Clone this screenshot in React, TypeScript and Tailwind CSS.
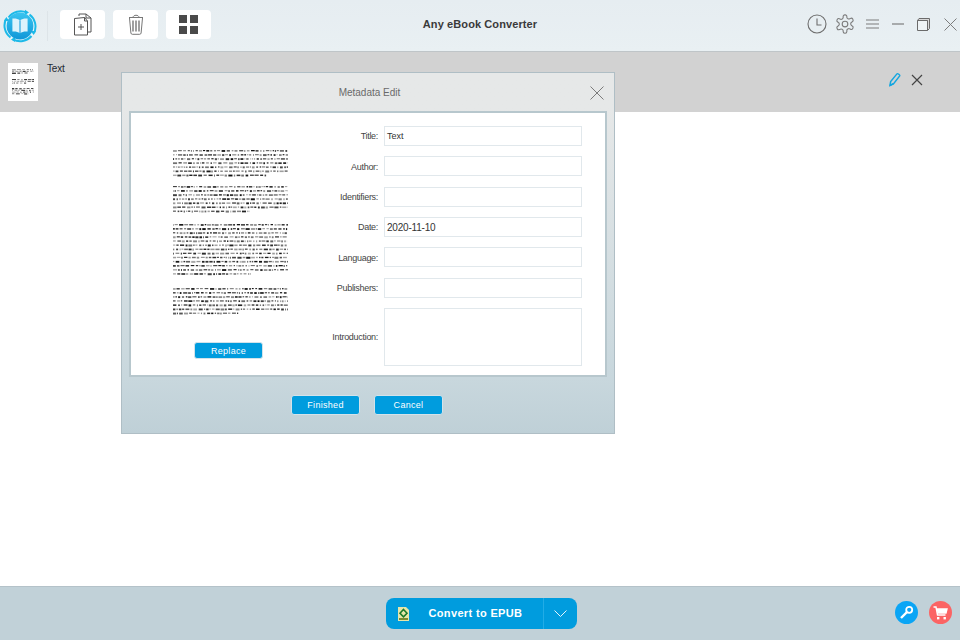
import React from "react";

function seeded(seed: number) {
  let s = seed;
  return () => {
    s = (s * 9301 + 49297) % 233280;
    return s / 233280;
  };
}

function DocPreview({ width, height, paras, lh, th = 1.1, color = "#111" }: { width: number; height: number; paras: [number, number][]; lh: number; th?: number; color?: string }) {
  const r = seeded(17);
  const items: React.ReactElement[] = [];
  paras.forEach(([y0, n], pi) => {
    for (let i = 0; i < n; i++) {
      let x = 0;
      const end = i === n - 1 ? width * (0.55 + r() * 0.3) : width;
      const y = y0 + i * lh;
      while (x < end) {
        const w = Math.min(0.8 + r() * 3.4, end - x);
        items.push(<rect key={`${pi}-${i}-${x}`} x={x} y={y} width={w} height={th + r() * 0.9} fill={color} opacity={0.35 + r() * 0.65} />);
        x += w + 0.7 + r() * 1.1;
      }
    }
  });
  return (
    <svg width={width} height={height} viewBox={`0 0 ${width} ${height}`} className="block">
      {items}
    </svg>
  );
}

function Logo() {
  return (
    <svg width="34" height="34" viewBox="0 0 34 34">
      <defs>
        <linearGradient id="lg" x1="0" y1="0" x2="0" y2="1">
          <stop offset="0" stopColor="#38c4f0" />
          <stop offset="1" stopColor="#1097d8" />
        </linearGradient>
      </defs>
      <circle cx="17" cy="17" r="15.6" fill="#e6f7fc" />
      <path d="M5.5 8.5A15 15 0 0 1 24 3.6" fill="none" stroke="#1cb9e8" strokeWidth="2" />
      <path d="M26.5 5.5A15 15 0 0 1 31 24" fill="none" stroke="#1cb9e8" strokeWidth="2" />
      <path d="M28.5 27A15 15 0 0 1 10 30.4" fill="none" stroke="#1cb9e8" strokeWidth="2" />
      <path d="M7.5 28.5A15 15 0 0 1 3 10" fill="none" stroke="#1cb9e8" strokeWidth="2" />
      <path d="M22 .8l4 2.8-4.2 2.4zM33 22l-2.4 4-2.8-4zM12 33l-4-2.6 4-2.6zM1 12l2.4-4 2.8 4z" fill="#1cb9e8" />
      <circle cx="17" cy="17" r="13.4" fill="url(#lg)" />
      <path d="M17 11.2c-2.2-1.5-5-2-7.6-1.6v13c2.6-.4 5.4.1 7.6 1.6 2.2-1.5 5-2 7.6-1.6v-13c-2.6-.4-5.4.1-7.6 1.6z" fill="#dcf3fc" />
      <path d="M17 11.2V24.2" stroke="#1a9fdc" strokeWidth="1.1" />
    </svg>
  );
}

function Field({ label, value, big, h = "h-5" }: { label: string; value?: string; big?: boolean; h?: string }) {
  return (
    <div className="flex items-center">
      <div className="w-[71px] pr-[6px] pt-[2px] text-right text-[9px] tracking-[-0.3px] text-[#444]">{label}</div>
      <div className={`${h} w-[198px] border border-[#e1e8ec] bg-white pl-[2px] flex items-center text-[#333] ${big ? "text-[10px] tracking-[-0.2px] pt-[2px]" : "text-[9px] pt-[2px]"}`}>
        {value}
      </div>
    </div>
  );
}

function SmallBtn({ children, w = "w-[69px]", h = "h-5" }: { children: React.ReactNode; w?: string; h?: string }) {
  return (
    <div className={`${w} ${h} rounded-[3px] bg-[#009cde] border border-[#d3e3ea] pt-[2px] text-white text-[9px] tracking-[0.3px] flex items-center justify-center`}>
      {children}
    </div>
  );
}

export default function App() {
  return (
    <div className="relative h-[640px] w-[960px] overflow-hidden bg-white font-['Liberation_Sans',Arial,sans-serif]">
      <div className="flex h-full flex-col">
        {/* Header */}
        <header className="relative flex h-[52px] items-center border-b border-[#bfc5c8] bg-gradient-to-b from-[#e6edf1] to-[#e9f0f3]">
          <div className="ml-[3px] flex h-[34px] w-[34px] items-center justify-center"><Logo /></div>
          <div className="ml-[10px] h-[30px] w-px bg-[#dde4e8]" />
          <div className="ml-3 mb-[2px] flex gap-2">
            <div className="flex h-[29px] w-[45px] items-center justify-center rounded-[4px] bg-white">
              <svg width="20" height="23" viewBox="0 0 20 23" fill="none" stroke="#555" strokeWidth="1">
                <path d="M6 3V1h7l5 4v14h-3" />
                <path d="M13 1v4h5" />
                <path d="M1.5 5.5V22h13V8l-3-3.5z" fill="#fff" />
                <path d="M11.5 4.5V8h3" />
                <path d="M8 11v6M5 14h6" />
              </svg>
            </div>
            <div className="flex h-[29px] w-[45px] items-center justify-center rounded-[4px] bg-white">
              <svg width="16" height="21" viewBox="0 0 16 21" fill="none" stroke="#777" strokeWidth="1">
                <path d="M1 3.5h14M5 3.5c0-3 6-3 6 0" />
                <path d="M1.5 4l1.4 15c.1.8.6 1.3 1.4 1.3h7.4c.8 0 1.3-.5 1.4-1.3L14.5 4" />
                <path d="M5 6.5v11M8 6.5v11M11 6.5v11" strokeWidth="1.4" />
              </svg>
            </div>
            <div className="flex h-[29px] w-[45px] items-center justify-center rounded-[4px] bg-white">
              <div className="grid grid-cols-2 gap-[3px]">
                <div className="h-2 w-2 bg-[#4a4a4a]" />
                <div className="h-2 w-2 bg-[#4a4a4a]" />
                <div className="h-2 w-2 bg-[#4a4a4a]" />
                <div className="h-2 w-2 bg-[#4a4a4a]" />
              </div>
            </div>
          </div>
          <div className="absolute left-[323px] top-[18px] w-[314px] text-center text-[11px] leading-3 font-bold tracking-[0.1px] text-[#3a3a3a]">Any eBook Converter</div>
          <div className="ml-auto mr-[3px] mb-[3px] flex items-center">
            <svg width="20" height="20" viewBox="0 0 20 20" fill="none" stroke="#6e6e6e" strokeWidth="1.1" className="mr-[8px]">
              <circle cx="10" cy="10" r="9" />
              <path d="M10 4.5V11h4.5" />
            </svg>
            <svg width="20" height="20" viewBox="0 0 24 24" fill="none" stroke="#7b7b7b" strokeWidth="1.3" className="mr-[11px]">
              <circle cx="12" cy="12" r="3.4" />
              <path d="M12.22 1h-.44a2 2 0 0 0-2 2v1.18a2 2 0 0 1-1 1.73l-.43.25a2 2 0 0 1-2 0l-.9-.4a2 2 0 0 0-2.73.73l-.22.38a2 2 0 0 0 .73 2.73l.9.6a2 2 0 0 1 1 1.72v.51a2 2 0 0 1-1 1.74l-.9.59a2 2 0 0 0-.73 2.73l.22.38a2 2 0 0 0 2.73.73l.9-.4a2 2 0 0 1 2 0l.43.25a2 2 0 0 1 1 1.73V21a2 2 0 0 0 2 2h.44a2 2 0 0 0 2-2v-1.18a2 2 0 0 1 1-1.73l.43-.25a2 2 0 0 1 2 0l.9.4a2 2 0 0 0 2.73-.73l.22-.39a2 2 0 0 0-.73-2.73l-.9-.59a2 2 0 0 1-1-1.74v-.5a2 2 0 0 1 1-1.74l.9-.59a2 2 0 0 0 .73-2.73l-.22-.38a2 2 0 0 0-2.73-.73l-.9.4a2 2 0 0 1-2 0l-.43-.25a2 2 0 0 1-1-1.73V3a2 2 0 0 0-2-2z" />
            </svg>
            <svg width="13" height="10" viewBox="0 0 13 10" stroke="#7d7d7d" strokeWidth="1.2" className="mr-[13px]">
              <path d="M0 1h13M0 5h13M0 9h13" />
            </svg>
            <svg width="12" height="2" viewBox="0 0 12 2" stroke="#7d7d7d" strokeWidth="1.2" className="mr-[13px]">
              <path d="M0 1h12" />
            </svg>
            <svg width="13" height="13" viewBox="0 0 13 13" fill="#d8d8d8" stroke="#6b6b6b" strokeWidth="1" className="mr-[14px]">
              <path d="M2 .5h10.5v10L10.5 12.5V2.5H.5z" />
              <path d="M.5 2.5h10v10H.5z" fill="#eef3f5" />
            </svg>
            <svg width="13" height="13" viewBox="0 0 13 13" stroke="#7d7d7d" strokeWidth="1">
              <path d="M.5.5l12 12M12.5.5l-12 12" />
            </svg>
          </div>
        </header>

        {/* File row */}
        <div className="flex h-[60px] items-start bg-[#d2d2d2]">
          <div className="ml-2 mt-[11px] flex h-[38px] w-[30px] items-center justify-center bg-white">
            <DocPreview width={22} height={26} paras={[[0, 3], [10, 3], [19, 4]]} lh={1.8} th={0.6} color="#222" />
          </div>
          <div className="ml-[9px] mt-[11px] text-[10px] leading-3 tracking-[-0.2px] text-[#1f2a33]">Text</div>
          <div className="ml-auto mr-[37px] mt-[20px] flex items-center gap-[10px]">
            <svg width="12" height="15" viewBox="0 0 13 15" fill="none" stroke="#12a6e0" strokeWidth="1.6">
              <path d="M1 14l.8-4.3L8.6 1.4c.7-.8 3.6 1.2 3 2.2L5 12z" />
              <path d="M1 14l4-2" />
            </svg>
            <svg width="12" height="12" viewBox="0 0 12 12" stroke="#444" strokeWidth="1.2">
              <path d="M1 1l10 10M11 1L1 11" />
            </svg>
          </div>
        </div>

        <main className="flex-1 bg-white" />

        {/* Footer */}
        <footer className="relative flex h-[54px] items-center justify-center border-t border-[#b4c2c9] bg-[#c1d1d8]">
          <div className="ml-[2px] flex h-[31px] w-[191px] items-stretch overflow-hidden rounded-[8px] bg-[#009cde] text-white">
            <div className="flex flex-1 items-center pl-[12px]">
              <svg width="11" height="14" viewBox="0 0 11 14">
                <path d="M0 0h8l3 3v11H0z" fill="#e7e6a8" />
                <path d="M5.5 2.5l3.5 3.7-3.5 3.6L2 6.2z" fill="none" stroke="#1c7a2a" strokeWidth="1.6" />
                <rect x="1" y="11" width="9" height="2" fill="#7a8a30" />
              </svg>
              <span className="ml-[20px] text-[11px] font-bold tracking-[0.35px]">Convert to EPUB</span>
            </div>
            <div className="flex w-[34px] items-center justify-center border-l border-[#22ace6]">
              <svg width="13" height="7" viewBox="0 0 13 7" fill="none" stroke="#e6f6fd" strokeWidth="1">
                <path d="M.5.5l6 6 6-6" />
              </svg>
            </div>
          </div>
          <div className="absolute right-[8px] top-[14px] flex gap-[11px]">
            <div className="flex h-[23px] w-[23px] items-center justify-center rounded-full bg-[#0aa5f5]">
              <svg width="15" height="15" viewBox="0 0 15 15" fill="none" stroke="#fff">
                <circle cx="10.2" cy="4.8" r="3" strokeWidth="1.8" />
                <path d="M8 7L2 13" strokeWidth="2.4" />
              </svg>
            </div>
            <div className="flex h-[23px] w-[23px] items-center justify-center rounded-full bg-[#fb6464]">
              <svg width="15" height="14" viewBox="0 0 15 14" fill="none" stroke="#fff" strokeWidth="1.4">
                <path d="M.5 1h2.5l1.5 8h8" />
                <path d="M3.6 3h10.4l-1 4H4.4" fill="#fff" />
                <rect x="4" y="11" width="2.4" height="2.4" fill="#fff" stroke="none" />
                <rect x="10.5" y="11" width="2.4" height="2.4" fill="#fff" stroke="none" />
              </svg>
            </div>
          </div>
        </footer>
      </div>

      {/* Modal */}
      <div className="absolute left-[121px] top-[72px] h-[362px] w-[494px] border border-[#afbec5] bg-gradient-to-b from-[#e6e8e8] from-[10%] via-[#c8d7dd] via-[85%] to-[#bfd0d7] px-[7px]">
        <div className="flex h-[38px] items-center justify-center pl-[3px] text-[10px] text-[#6a6a6a]">
          Metadata Edit
          <svg width="14" height="14" viewBox="0 0 14 14" stroke="#7b7b7b" strokeWidth="1" className="absolute right-[10px] top-[13px]">
            <path d="M.5.5l13 13M13.5.5l-13 13" />
          </svg>
        </div>
        <div className="flex h-[266px] w-[478px] border-2 border-[#b7c7cd] bg-white">
          <div className="flex w-[197px] flex-col items-center">
            <div className="ml-[1px] mt-[36px] h-[168px]">
              <DocPreview width={115} height={168} paras={[[1, 7], [37, 7], [75, 13], [139, 7]]} lh={4.1} />
            </div>
            <div className="mr-[2px] mt-[25px]">
              <SmallBtn w="w-[69px]" h="h-[17px]">Replace</SmallBtn>
            </div>
          </div>
          <div className="ml-[-15px] flex flex-col gap-[10.33px] pt-[13px]">
            <Field label="Title:" value="Text" />
            <Field label="Author:" />
            <Field label="Identifiers:" />
            <Field label="Date:" value="2020-11-10" big />
            <Field label="Language:" />
            <Field label="Publishers:" />
            <Field label="Introduction:" h="h-[58px]" />
          </div>
        </div>
        <div className="ml-[162px] mt-[18px] flex gap-[14px]">
          <SmallBtn>Finished</SmallBtn>
          <SmallBtn>Cancel</SmallBtn>
        </div>
      </div>
    </div>
  );
}
